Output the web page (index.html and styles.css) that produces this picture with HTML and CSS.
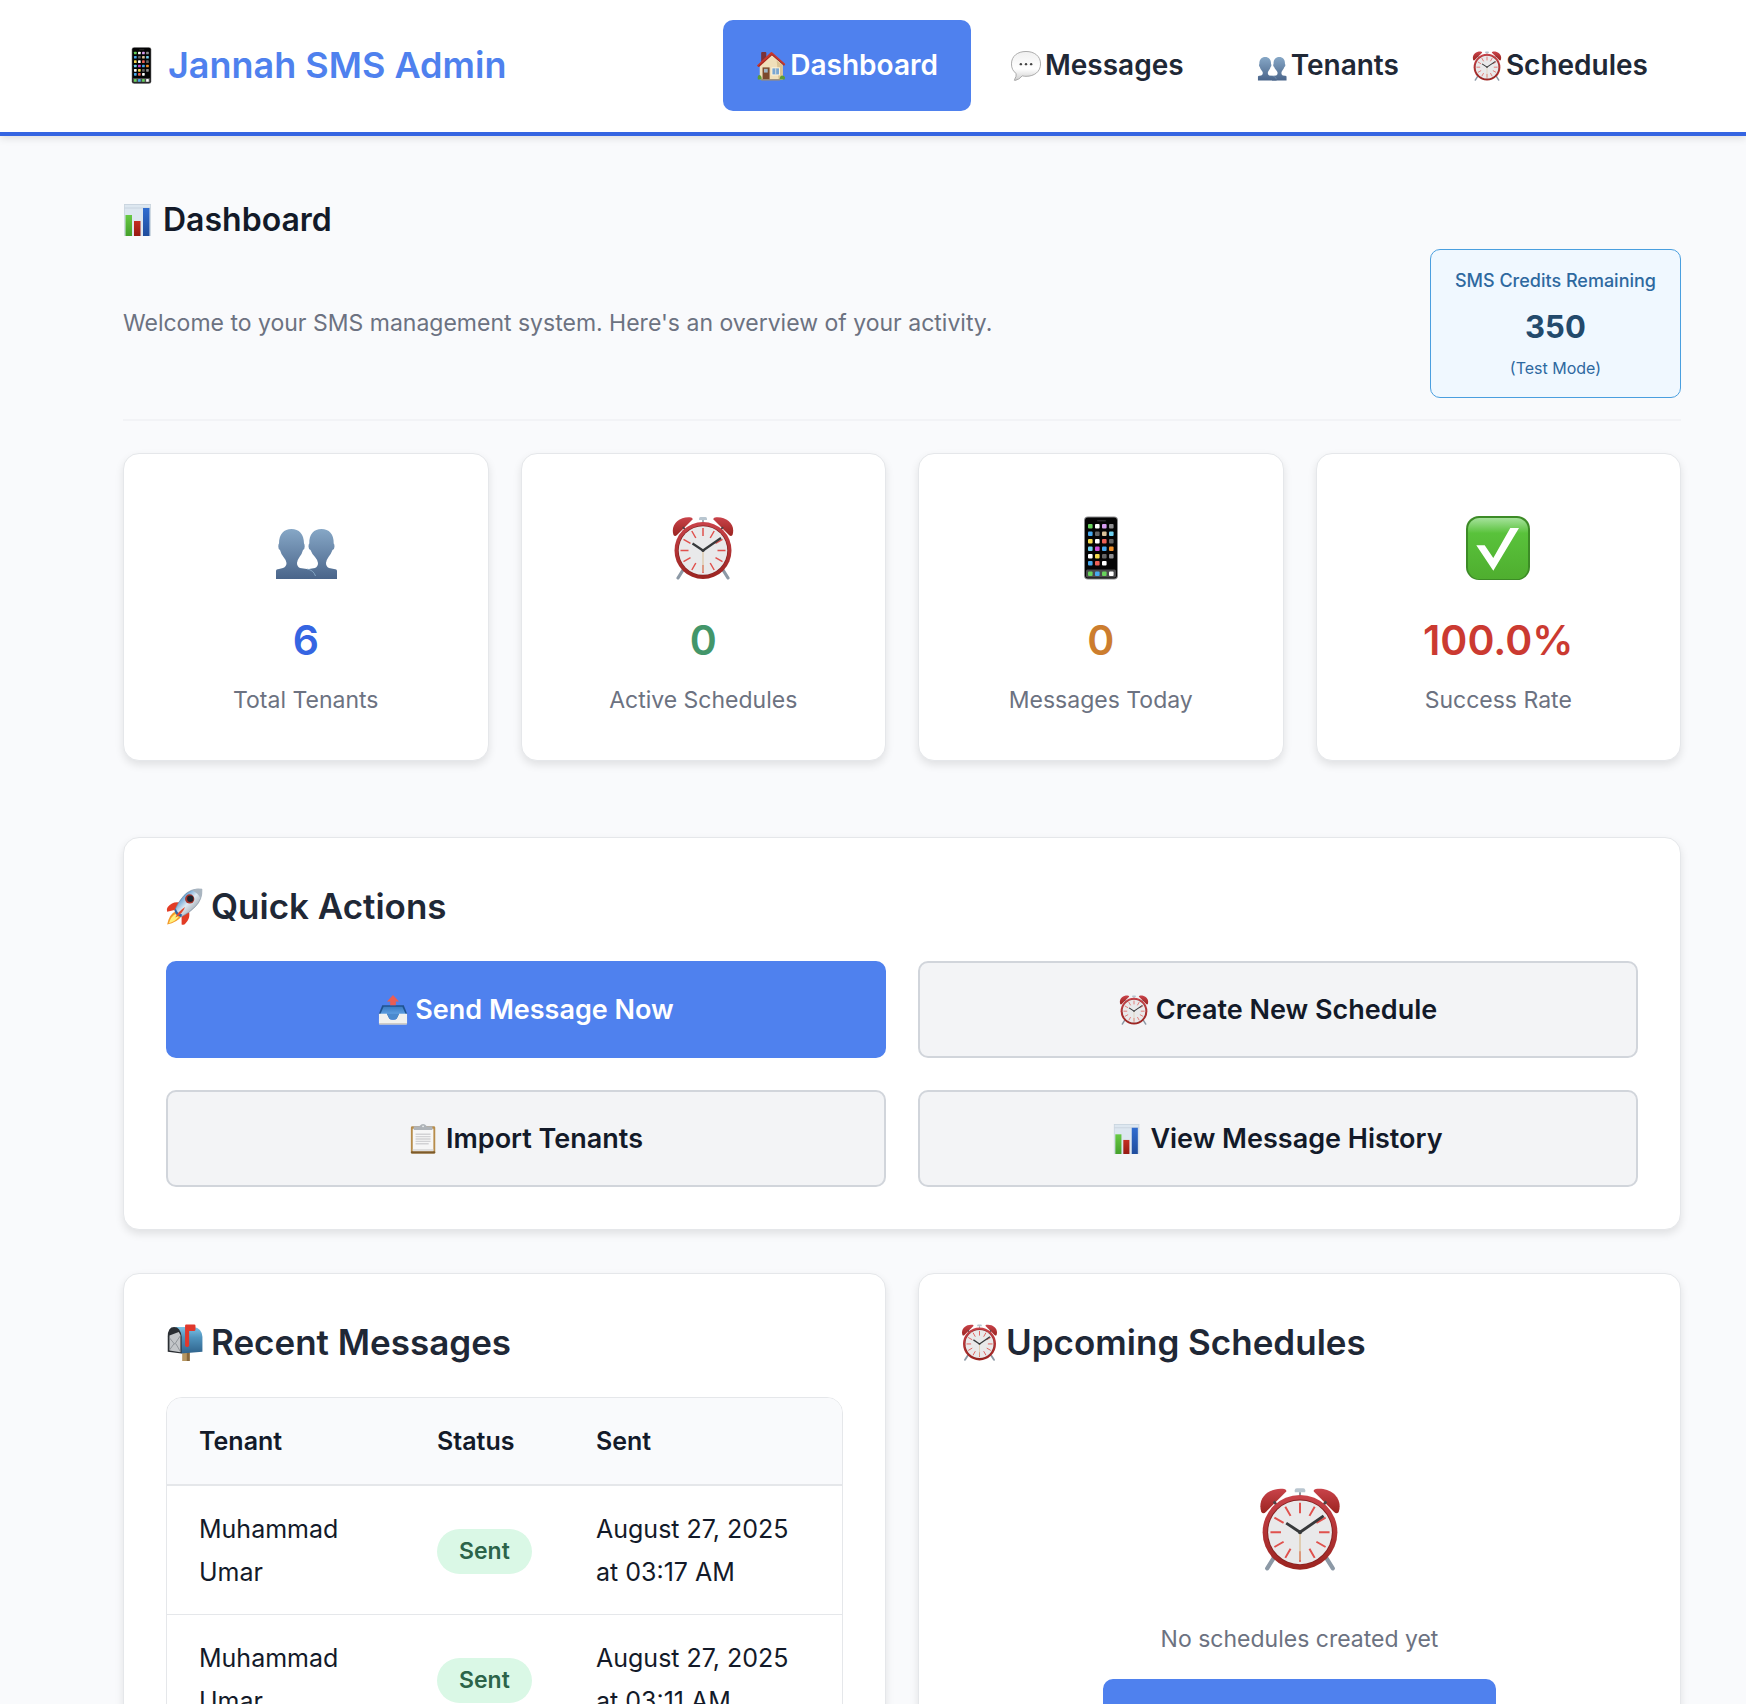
FILE: index.html
```html
<!DOCTYPE html>
<html lang="en">
<head>
<meta charset="utf-8">
<meta name="viewport" content="width=device-width, initial-scale=1">
<title>Jannah SMS Admin</title>
<link rel="stylesheet" href="styles.css">
</head>
<body>
<svg class="sprite" aria-hidden="true">
  <defs>
    <linearGradient id="g-people" x1="0" y1="0" x2="0" y2="1"><stop offset="0" stop-color="#86a7c6"/><stop offset="0.45" stop-color="#6b89ab"/><stop offset="1" stop-color="#4a658a"/></linearGradient>
    <linearGradient id="g-red" x1="0" y1="0" x2="0" y2="1"><stop offset="0" stop-color="#c9434a"/><stop offset="1" stop-color="#9b2420"/></linearGradient>
    <linearGradient id="g-check" x1="0" y1="0" x2="0" y2="1"><stop offset="0" stop-color="#a5e29b"/><stop offset="0.25" stop-color="#59c23b"/><stop offset="1" stop-color="#4fae2f"/></linearGradient>
    <linearGradient id="g-bubble" x1="0" y1="0" x2="0" y2="1"><stop offset="0" stop-color="#f0f0f0"/><stop offset="0.6" stop-color="#ffffff"/><stop offset="1" stop-color="#cccccc"/></linearGradient>
    <linearGradient id="g-green" x1="0" y1="0" x2="0" y2="1"><stop offset="0" stop-color="#67c943"/><stop offset="1" stop-color="#45a02c"/></linearGradient>
    <linearGradient id="g-crimson" x1="0" y1="0" x2="0" y2="1"><stop offset="0" stop-color="#c52d22"/><stop offset="1" stop-color="#961a13"/></linearGradient>
    <linearGradient id="g-navy" x1="0" y1="0" x2="0" y2="1"><stop offset="0" stop-color="#2f6cd0"/><stop offset="1" stop-color="#1f4c9c"/></linearGradient>
    <linearGradient id="g-mail" x1="0" y1="0" x2="0" y2="1"><stop offset="0" stop-color="#7cc3e6"/><stop offset="0.4" stop-color="#4f93bd"/><stop offset="1" stop-color="#2f638c"/></linearGradient>
    <linearGradient id="g-rocket" x1="0" y1="0" x2="1" y2="1"><stop offset="0" stop-color="#3f83c4"/><stop offset="0.3" stop-color="#6ea6d6"/><stop offset="0.5" stop-color="#dfe9f1"/><stop offset="1" stop-color="#6b747e"/></linearGradient>
    <linearGradient id="g-tray" x1="0" y1="0" x2="0" y2="1"><stop offset="0" stop-color="#3a7cc4"/><stop offset="1" stop-color="#5f9fe2"/></linearGradient>
  </defs>
  <symbol id="phone" viewBox="0 0 64 64">
    <rect x="15" y="0.500" width="34" height="63" rx="4" fill="#8a8a8c"/>
    <rect x="16" y="1.500" width="32" height="61" rx="3" fill="#050505"/>
    <rect x="28" y="4" width="9" height="1.500" rx="0.700" fill="#2b2b2b"/>
    <rect x="17" y="53.500" width="30" height="8" rx="1.500" fill="#4a4a4c"/>
    <g fill="#fff"><rect x="26" y="8" width="4.600" height="4.600" rx="1"/><rect x="26" y="23" width="4.600" height="4.600" rx="1"/><rect x="19" y="38" width="4.600" height="4.600" rx="1"/><rect x="33" y="45" width="4.600" height="4.600" rx="1"/><rect x="40" y="55.500" width="4.600" height="4.600" rx="1"/></g>
    <g fill="#68d35c"><rect x="19" y="8" width="4.600" height="4.600" rx="1"/><rect x="19" y="55.500" width="4.600" height="4.600" rx="1"/><rect x="33" y="55.500" width="4.600" height="4.600" rx="1"/></g>
    <g fill="#d79cf0"><rect x="33" y="8" width="4.600" height="4.600" rx="1"/></g>
    <g fill="#cf4fd8"><rect x="26" y="30.500" width="4.600" height="4.600" rx="1"/></g>
    <g fill="#8e8e90"><rect x="40" y="8" width="4.600" height="4.600" rx="1"/><rect x="40" y="38" width="4.600" height="4.600" rx="1"/></g>
    <g fill="#666"><rect x="26" y="15.500" width="4.600" height="4.600" rx="1"/><rect x="40" y="23" width="4.600" height="4.600" rx="1"/><rect x="33" y="38" width="4.600" height="4.600" rx="1"/></g>
    <g fill="#47a9ef"><rect x="19" y="15.500" width="4.600" height="4.600" rx="1"/><rect x="33" y="30.500" width="4.600" height="4.600" rx="1"/><rect x="19" y="45" width="4.600" height="4.600" rx="1"/><rect x="26" y="55.500" width="4.600" height="4.600" rx="1"/></g>
    <g fill="#6fd3f2"><rect x="40" y="15.500" width="4.600" height="4.600" rx="1"/><rect x="19" y="30.500" width="4.600" height="4.600" rx="1"/></g>
    <g fill="#dcc39a"><rect x="33" y="15.500" width="4.600" height="4.600" rx="1"/></g>
    <g fill="#f7dc4e"><rect x="19" y="23" width="4.600" height="4.600" rx="1"/><rect x="26" y="38" width="4.600" height="4.600" rx="1"/></g>
    <g fill="#ec6156"><rect x="33" y="23" width="4.600" height="4.600" rx="1"/><rect x="26" y="45" width="4.600" height="4.600" rx="1"/></g>
    <g fill="#f2922c"><rect x="40" y="30.500" width="4.600" height="4.600" rx="1"/></g>
  </symbol>
  <symbol id="people" viewBox="0 0 64 64">
    <path fill="url(#g-people)" d="M32 63V55Q32 53 35 53L41 52Q44 50.500 44 47Q44 44.500 41 41Q38 38 36.500 34Q34.500 33.500 34.500 30.500Q34.500 28 35.300 27.500C35 18 40 13 47.500 13S60 18 59.700 27.500Q60.500 28 60.500 30.500Q60.500 33.500 58.500 34Q57 38 54.500 41Q52 44.500 52 47Q52 50.500 55 52L60 53Q63 53 63 55V63Z"/>
    <path fill="url(#g-people)" d="M2 63V55Q2 53 5 53L9 52Q12.500 50.500 12.500 47Q12.500 44.500 9.500 41Q7 38 6 34Q4.300 33.500 4.300 30.500Q4.300 28 5 27.500C5 18 10 13 17.500 13S30 18 30 27.500Q30.700 28 30.700 30.500Q30.700 33.500 29 34Q28 38 25.500 41Q23 44.500 23 47Q23 50.500 26 52L33 53Q40 54 42 63Z"/>
    <path d="M33 53Q39.500 54 41.500 60" fill="none" stroke="#8fb2cf" stroke-width="0.800"/>
  </symbol>
  <symbol id="clock" viewBox="0 0 64 64">
    <path d="M12 54L7 62M52 54L57 62" stroke="#8c99a6" stroke-width="3.200" stroke-linecap="round"/>
    <path d="M28 2.500Q28 1 29.500 1H34.500Q36 1 36 2.500V4H28Z" fill="#b9c6d0"/><path d="M32 4V8" stroke="#8b979f" stroke-width="1.500"/>
    <path d="M2.500 19C-1 8 9 0 20 1.500Q22 2 21.500 3.500L6 19Q4 21 2.500 19Z" fill="url(#g-red)"/>
    <path d="M61.500 19C65 8 55 0 44 1.500Q42 2 42.500 3.500L58 19Q60 21 61.500 19Z" fill="url(#g-red)"/>
    <path d="M12 11l4 5M52 11l-4 5" stroke="#4d4448" stroke-width="2"/>
    <circle cx="32" cy="34.500" r="28.500" fill="url(#g-red)"/>
    <circle cx="32" cy="34.500" r="25" fill="#85201f"/>
    <circle cx="32" cy="34.500" r="24.300" fill="#e9e9ea"/>
    <g stroke="#e0514d" stroke-width="1.500"><path d="M32 12v8M32 49v8M9.500 34.500h8M46.500 34.500h8M20.800 15l4 7M39.200 47l4 7M43.200 15l-4 7M24.800 47l-4 7M12.500 23.300l7 4M44.500 41.700l7 4M51.500 23.300l-7 4M19.500 41.700l-7 4"/></g>
    <path d="M32 34.500V56" stroke="#d9bd93" stroke-width="1"/>
    <path d="M32 34.500L21.500 27.500M32 34.500L50 22" stroke="#37393b" stroke-width="2.200"/>
    <circle cx="32" cy="34.500" r="1.500" fill="#37393b"/>
  </symbol>
  <symbol id="check" viewBox="0 0 64 64">
    <rect width="64" height="64" rx="13" fill="#3c8b26"/>
    <rect x="2" y="2" width="60" height="61" rx="11.500" fill="url(#g-check)"/>
    <path d="M10.300 29.300H18.700L27.300 42L44.300 12H53L27.300 54.700Z" fill="#fff"/>
  </symbol>
  <symbol id="chart" viewBox="0 0 64 64">
    <rect x="2" y="0" width="54" height="64" fill="#dde7f0"/>
    <path d="M2 1H56M2 8H56" stroke="#c5d1dc" stroke-width="1.600"/>
    <path d="M3 0V64M55 0V64" stroke="#c9d4de" stroke-width="1.500"/>
    <rect x="5" y="22" width="13" height="42" fill="url(#g-green)"/>
    <rect x="22" y="34" width="13" height="30" fill="url(#g-crimson)"/>
    <rect x="40" y="8" width="13" height="56" fill="url(#g-navy)"/>
  </symbol>
  <symbol id="house" viewBox="0 0 64 64">
    <path d="M11 24V4Q11 2 13 2H20Q22 2 22 4V16Z" fill="#7b3138"/>
    <path d="M8 29L33 7L57 29V61H8Z" fill="#f0dfba"/>
    <path d="M44 20L57 30V61H48Z" fill="#dcc495"/>
    <path d="M2 31L31 3Q33 1.500 35 3L62 27Q63 30 60 31L34 9L7 34Q3 34 2 31Z" fill="#c8372d"/>
    <path d="M5 33L34 8L60 31" fill="none" stroke="#8a201c" stroke-width="1.500"/>
    <rect x="14" y="35" width="15" height="26" fill="#7c4a2c"/><rect x="17" y="38" width="8" height="8" fill="#9fb6c4"/>
    <rect x="33" y="35" width="18" height="17" fill="#fff6df"/><rect x="35" y="37" width="14" height="13" fill="#7aa6d0"/><path d="M42 37v13" stroke="#fff6df" stroke-width="1.500"/>
    <path d="M4 61Q2 51 8 51Q13 53 12 61Z" fill="#5b9c35"/><path d="M50 61Q51 52 56 52Q64 53 61 61Z" fill="#5b9c35"/>
    <rect x="11" y="60" width="40" height="3" fill="#9c8b74"/>
  </symbol>
  <symbol id="bubble" viewBox="0 0 64 64">
    <path d="M32 1C50 1 63 11 63 27.500S50 54 32 54Q28 54 24 53Q18 61 8 63Q6 63 8 60Q12 54 11 48Q1 41 1 27.500C1 11 14 1 32 1Z" fill="url(#g-bubble)" stroke="#a6a6a6" stroke-width="2"/>
    <g fill="#444"><circle cx="21" cy="28" r="2.600"/><circle cx="32" cy="28" r="2.600"/><circle cx="43" cy="28" r="2.600"/></g>
  </symbol>
  <symbol id="rocket" viewBox="0 0 64 64">
    <path d="M17 40Q6 44 2 63Q19 60 27 49Z" fill="#f39a2b"/><path d="M16 45Q8 50 5 61Q15 58 22 50Z" fill="#fff07a"/>
    <path d="M23 25Q11 23 3 33Q0 37 2 41L18 37Z" fill="#e23c25"/><path d="M40 42Q42 53 34 61Q31 65 27 63L27 46Z" fill="#e23c25"/>
    <path d="M62 2Q43 0 31 13Q20 25 15 39Q16 46 26 50Q41 43 51 32Q63 20 62 2Z" fill="url(#g-rocket)" stroke="#6f8193" stroke-width="1"/>
    <path d="M62 2Q52 0 45 4Q56 9 60 19Q63 10 62 2Z" fill="#a9b5c0"/>
    <path d="M17 35Q18 43 28 46L26 50Q16 47 15 39Z" fill="#2f65a5"/>
    <circle cx="41" cy="19" r="8" fill="#a9342b"/><circle cx="42" cy="18.500" r="5.500" fill="#1d2630"/>
    <path d="M33 33Q22 40 16 51Q28 46 33 33Z" fill="#e5492d"/>
  </symbol>
  <symbol id="outbox" viewBox="0 0 64 64">
    <path d="M9 22H55L62 40V50H2V40Z" fill="#1f5390"/>
    <path d="M12 25H52L59 41H5Z" fill="url(#g-tray)"/>
    <path d="M2 40H19L24 50Q26 53 32 53T40 50L45 40H62V61Q62 63 60 63H4Q2 63 2 61Z" fill="#f1f1ef"/>
    <path d="M19 40H45L40 50Q38 53 32 53T24 50Z" fill="#4b8ace"/>
    <path d="M2 60H62V61Q62 63 60 63H4Q2 63 2 61Z" fill="#c2bfba"/>
    <path d="M32 0L45 14H38V22H26V14H19Z" fill="#ea5d53"/>
  </symbol>
  <symbol id="clipboard" viewBox="0 0 64 64">
    <rect x="4" y="5" width="52" height="58" rx="3" fill="#b78c4a"/><rect x="4" y="58" width="52" height="5" rx="2" fill="#7c5a2b"/>
    <rect x="8" y="10" width="44" height="48" fill="#f6f6f6"/><rect x="8" y="54" width="44" height="3" fill="#d4d4d4"/>
    <path d="M14 22H46M14 27H46M14 32H46M14 37H46M14 42H42" stroke="#d2d2d4" stroke-width="3"/>
    <path d="M10 5H22L26 1Q30 -1 34 1L38 5H50V11Q50 13 48 13H12Q10 13 10 11Z" fill="#aeb3b8"/><circle cx="30" cy="5" r="2" fill="#e9ecee"/>
  </symbol>
  <symbol id="mailbox" viewBox="0 0 64 64">
    <rect x="28" y="44" width="13" height="20" fill="#b79761"/><rect x="36" y="44" width="5" height="20" fill="#86683c"/>
    <path d="M14 5H48Q62 7 63 22V48L26 51V24Q24 8 14 5Z" fill="url(#g-mail)"/>
    <path d="M3 22Q3 5 14 5T27 22V51L3 48Z" fill="#2a2e33"/>
    <path d="M6 20L22 14L25 19V49L6 46Z" fill="#c3c6c9"/><path d="M6 24L15 35L25 20M6 45L14 34M25 48L17 34" fill="none" stroke="#85898e" stroke-width="1.400"/>
    <path d="M33 3Q33 1 35 1H49Q51 1 51 3V10Q51 12 49 12H40V38Q37 42 33 38Z" fill="#e0382c"/>
  </symbol>
</svg>

<header class="topbar">
  <a class="brand" href="#"><svg class="icon" aria-hidden="true"><use href="#phone"/></svg>Jannah SMS Admin</a>
  <nav class="nav" aria-label="Main">
    <a class="nav-link nav-link-active" href="#" aria-current="page"><svg class="icon" aria-hidden="true"><use href="#house"/></svg>Dashboard</a>
    <a class="nav-link" href="#messages"><svg class="icon" aria-hidden="true"><use href="#bubble"/></svg>Messages</a>
    <a class="nav-link" href="#tenants"><svg class="icon" aria-hidden="true"><use href="#people"/></svg>Tenants</a>
    <a class="nav-link" href="#schedules"><svg class="icon" aria-hidden="true"><use href="#clock"/></svg>Schedules</a>
  </nav>
</header>

<main class="page">
  <h1 class="page-title"><svg class="icon" aria-hidden="true"><use href="#chart"/></svg>Dashboard</h1>
  <div class="intro">
    <p class="intro-text">Welcome to your SMS management system. Here's an overview of your activity.</p>
    <div class="credits">
      <span class="credits-label">SMS Credits Remaining</span>
      <strong class="credits-value">350</strong>
      <span class="credits-mode">(Test Mode)</span>
    </div>
  </div>

  <section class="stats" aria-label="Statistics">
    <div class="card stat"><div class="stat-icon"><svg class="icon" aria-hidden="true"><use href="#people"/></svg></div><div class="stat-value blue">6</div><div class="stat-label">Total Tenants</div></div>
    <div class="card stat"><div class="stat-icon"><svg class="icon" aria-hidden="true"><use href="#clock"/></svg></div><div class="stat-value green">0</div><div class="stat-label">Active Schedules</div></div>
    <div class="card stat"><div class="stat-icon"><svg class="icon" aria-hidden="true"><use href="#phone"/></svg></div><div class="stat-value orange">0</div><div class="stat-label">Messages Today</div></div>
    <div class="card stat"><div class="stat-icon"><svg class="icon" aria-hidden="true"><use href="#check"/></svg></div><div class="stat-value red">100.0%</div><div class="stat-label">Success Rate</div></div>
  </section>

  <section class="card quick">
    <h2 class="card-title"><svg class="icon" aria-hidden="true"><use href="#rocket"/></svg>Quick Actions</h2>
    <div class="actions">
      <button class="btn btn-primary" type="button"><svg class="icon" aria-hidden="true"><use href="#outbox"/></svg>Send Message Now</button>
      <button class="btn" type="button"><svg class="icon" aria-hidden="true"><use href="#clock"/></svg>Create New Schedule</button>
      <button class="btn" type="button"><svg class="icon" aria-hidden="true"><use href="#clipboard"/></svg>Import Tenants</button>
      <button class="btn" type="button"><svg class="icon" aria-hidden="true"><use href="#chart"/></svg>View Message History</button>
    </div>
  </section>

  <div class="columns">
    <section class="card">
      <h2 class="card-title"><svg class="icon" aria-hidden="true"><use href="#mailbox"/></svg>Recent Messages</h2>
      <div class="table-wrap">
        <table class="table">
          <colgroup><col class="col-tenant"><col class="col-status"><col></colgroup>
          <thead><tr><th scope="col">Tenant</th><th scope="col">Status</th><th scope="col">Sent</th></tr></thead>
          <tbody>
            <tr><td>Muhammad Umar</td><td><span class="pill">Sent</span></td><td>August 27, 2025 at 03:17 AM</td></tr>
            <tr><td>Muhammad Umar</td><td><span class="pill">Sent</span></td><td>August 27, 2025 at 03:11 AM</td></tr>
          </tbody>
        </table>
      </div>
    </section>
    <section class="card">
      <h2 class="card-title"><svg class="icon" aria-hidden="true"><use href="#clock"/></svg>Upcoming Schedules</h2>
      <div class="empty">
        <div class="empty-icon"><svg class="icon" aria-hidden="true"><use href="#clock"/></svg></div>
        <p class="empty-text">No schedules created yet</p>
        <button class="btn btn-primary" type="button">Create First Schedule</button>
      </div>
    </section>
  </div>
</main>
</body>
</html>
```
FILE: styles.css
```css
*, *::before, *::after { box-sizing: border-box; }

html { height: 100%; overflow: hidden; }

body {
  margin: 0;
  height: 100%;
  overflow-y: auto;
  scrollbar-width: none;
  background: #f9fafc;
  color: #131a29;
  font-family: Inter, "Liberation Sans", sans-serif;
  font-size: 25px;
  line-height: 43px;
}

h1, h2, p { margin: 0; }

.sprite { position: absolute; width: 0; height: 0; }

.icon { flex: none; width: 30px; height: 30px; }

/* Header */
.topbar {
  display: flex;
  justify-content: space-between;
  align-items: center;
  padding: 20px 65px 21px 123px;
  background: #fff;
  border-bottom: 4px solid #3565e2;
  box-shadow: 0 2px 8px rgba(0, 0, 0, 0.12);
}

.brand {
  display: flex;
  align-items: center;
  gap: 8px;
  color: #4f81ee;
  font-size: 36px;
  font-weight: 600;
  text-decoration: none;
}

.brand .icon { width: 37px; height: 37px; }

.nav { display: flex; gap: 7px; }

.nav-link {
  display: flex;
  align-items: center;
  gap: 4px;
  padding: 24px 33px;
  border-radius: 10px;
  color: #1f2836;
  font-size: 28px;
  font-weight: 600;
  text-decoration: none;
}

.nav-link-active { background: #4f81ee; color: #fff; }

/* Page head */
.page { padding: 60px 65px 43px 123px; }

.page-title {
  display: flex;
  align-items: center;
  gap: 8px;
  margin-bottom: 5px;
  font-size: 32px;
  font-weight: 600;
  line-height: 48px;
}

.page-title .icon { width: 32px; height: 32px; }

.intro {
  display: flex;
  justify-content: space-between;
  align-items: center;
  margin-bottom: 32px;
  padding-bottom: 21px;
  border-bottom: 2px solid #f2f3f6;
}

.intro-text { color: #6c7281; font-size: 23px; }

.credits {
  display: flex;
  flex-direction: column;
  align-items: center;
  padding: 16px 24px;
  border: 1px solid #4a9fdf;
  border-radius: 10px;
  background: #f0f8ff;
  color: #2e699f;
}

.credits-label { font-size: 18px; font-weight: 500; line-height: 30px; }
.credits-value { margin: 7px 0 4px; color: #234a6c; font-size: 31px; font-weight: 700; line-height: 48px; }
.credits-mode { font-size: 16px; line-height: 26px; }

/* Cards */
.card {
  padding: 42px;
  background: #fff;
  border: 1px solid #e5e7ea;
  border-radius: 16px;
  box-shadow: 0 4px 8px rgba(0, 0, 0, 0.1);
}

.card-title {
  display: flex;
  align-items: center;
  gap: 8px;
  margin-bottom: 29px;
  color: #1f2836;
  font-size: 35px;
  font-weight: 600;
  line-height: 52px;
}

.card-title .icon { width: 37px; height: 37px; }

.stats {
  display: grid;
  grid-template-columns: repeat(4, 1fr);
  gap: 32px;
  margin-bottom: 76px;
}

.stat { text-align: center; }

.stat-icon { display: flex; justify-content: center; align-items: center; height: 104px; margin-bottom: 12px; }
.stat-icon .icon { width: 64px; height: 64px; }
.stat-value { margin-bottom: 14px; font-size: 41px; font-weight: 600; line-height: 56px; }
.stat-label { color: #6c7281; font-size: 23px; line-height: 36px; }

.blue { color: #3565e2; }
.green { color: #43966a; }
.orange { color: #cc7d2e; }
.red { color: #cb3a31; }

/* Actions */
.quick { margin-bottom: 43px; }

.actions { display: grid; grid-template-columns: 1fr 1fr; gap: 32px; }

.btn {
  display: flex;
  justify-content: center;
  align-items: center;
  gap: 7px;
  padding: 25px 41px;
  border: 2px solid #d1d5db;
  border-radius: 10px;
  background: #f3f4f6;
  color: #131a29;
  font-family: inherit;
  font-size: 27px;
  font-weight: 600;
  line-height: 43px;
  cursor: pointer;
}

.btn-primary { border-color: #4f81ee; background: #4f81ee; color: #fff; }

/* Lower columns */
.columns { display: grid; grid-template-columns: 1fr 1fr; gap: 32px; }

.table-wrap { overflow: hidden; border: 1px solid #e5e7ea; border-radius: 16px; }

.table { width: 100%; border-collapse: separate; border-spacing: 0; table-layout: fixed; }
.col-tenant { width: 238px; }
.col-status { width: 159px; }

.table th, .table td { padding: 22px 32px 20px; text-align: left; }
.table th { padding-bottom: 21px; background: #f9fafc; border-bottom: 2px solid #e5e7ea; font-weight: 600; }
.table td { border-bottom: 1px solid #e5e7ea; }

.pill {
  display: inline-block;
  padding: 0 22px;
  border-radius: 23px;
  background: #daf8e6;
  color: #2c6449;
  font-size: 23px;
  font-weight: 600;
  line-height: 45px;
  vertical-align: middle;
}

.empty { display: flex; flex-direction: column; align-items: center; padding-top: 68px; }
.empty-icon { display: flex; align-items: center; height: 128px; margin-bottom: 28px; }
.empty-icon .icon { width: 84px; height: 84px; }
.empty-text { margin-bottom: 22px; color: #6c7281; font-size: 23px; line-height: 36px; }
.empty .btn { min-width: 393px; }
```
